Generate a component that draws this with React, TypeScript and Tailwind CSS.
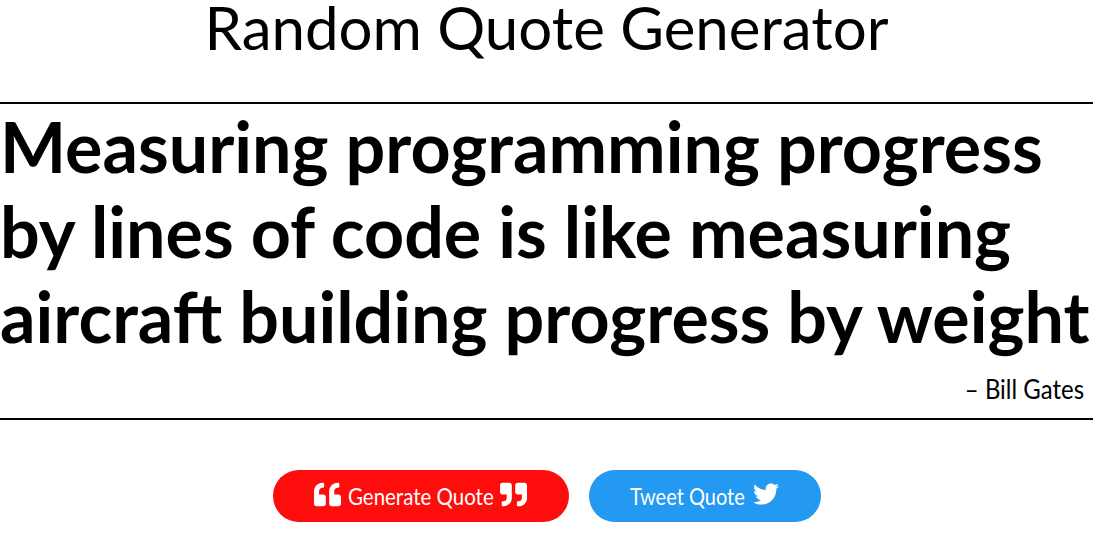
import React from "react"
import { FaQuoteLeft, FaQuoteRight, FaTwitter } from "react-icons/fa"

const App = () => {
  return (
    <div className="bg-white text-black font-['Lato',sans-serif] overflow-hidden">
      <h1 className="text-center text-[60px] leading-[54px] h-[102px]">Random Quote Generator</h1>
      <div className="border-y-2 border-black h-[318px]">
        <p className="text-[70px] leading-[85px] font-bold whitespace-nowrap">
          Measuring programming progress
          <br />
          by lines of code is like measuring
          <br />
          aircraft building progress by weight
        </p>
        <p className="text-right text-[27px] leading-[30px] pr-[9px] mt-[15px] origin-right scale-x-[.887] -translate-x-px">– Bill Gates</p>
      </div>
      <div className="flex justify-center gap-5 mt-[50px]">
        <button className="h-[52px] w-[296px] rounded-full bg-[#ff0d0d] text-white text-[24px] flex items-center justify-center gap-[7px]">
          <FaQuoteLeft className="text-[27px] -mt-1" />
          <span className="w-[145px] text-left whitespace-nowrap origin-left scale-x-[.853]">Generate Quote</span>
          <FaQuoteRight className="text-[27px] -mt-1" />
        </button>
        <button className="h-[52px] w-[232px] rounded-full bg-[#2499f1] text-white text-[24px] flex items-center justify-center gap-2">
          <span className="w-[115px] text-left whitespace-nowrap origin-left scale-x-[.833]">Tweet Quote</span>
          <FaTwitter className="text-[26px] -mt-1" />
        </button>
      </div>
    </div>
  )
}

export default App
